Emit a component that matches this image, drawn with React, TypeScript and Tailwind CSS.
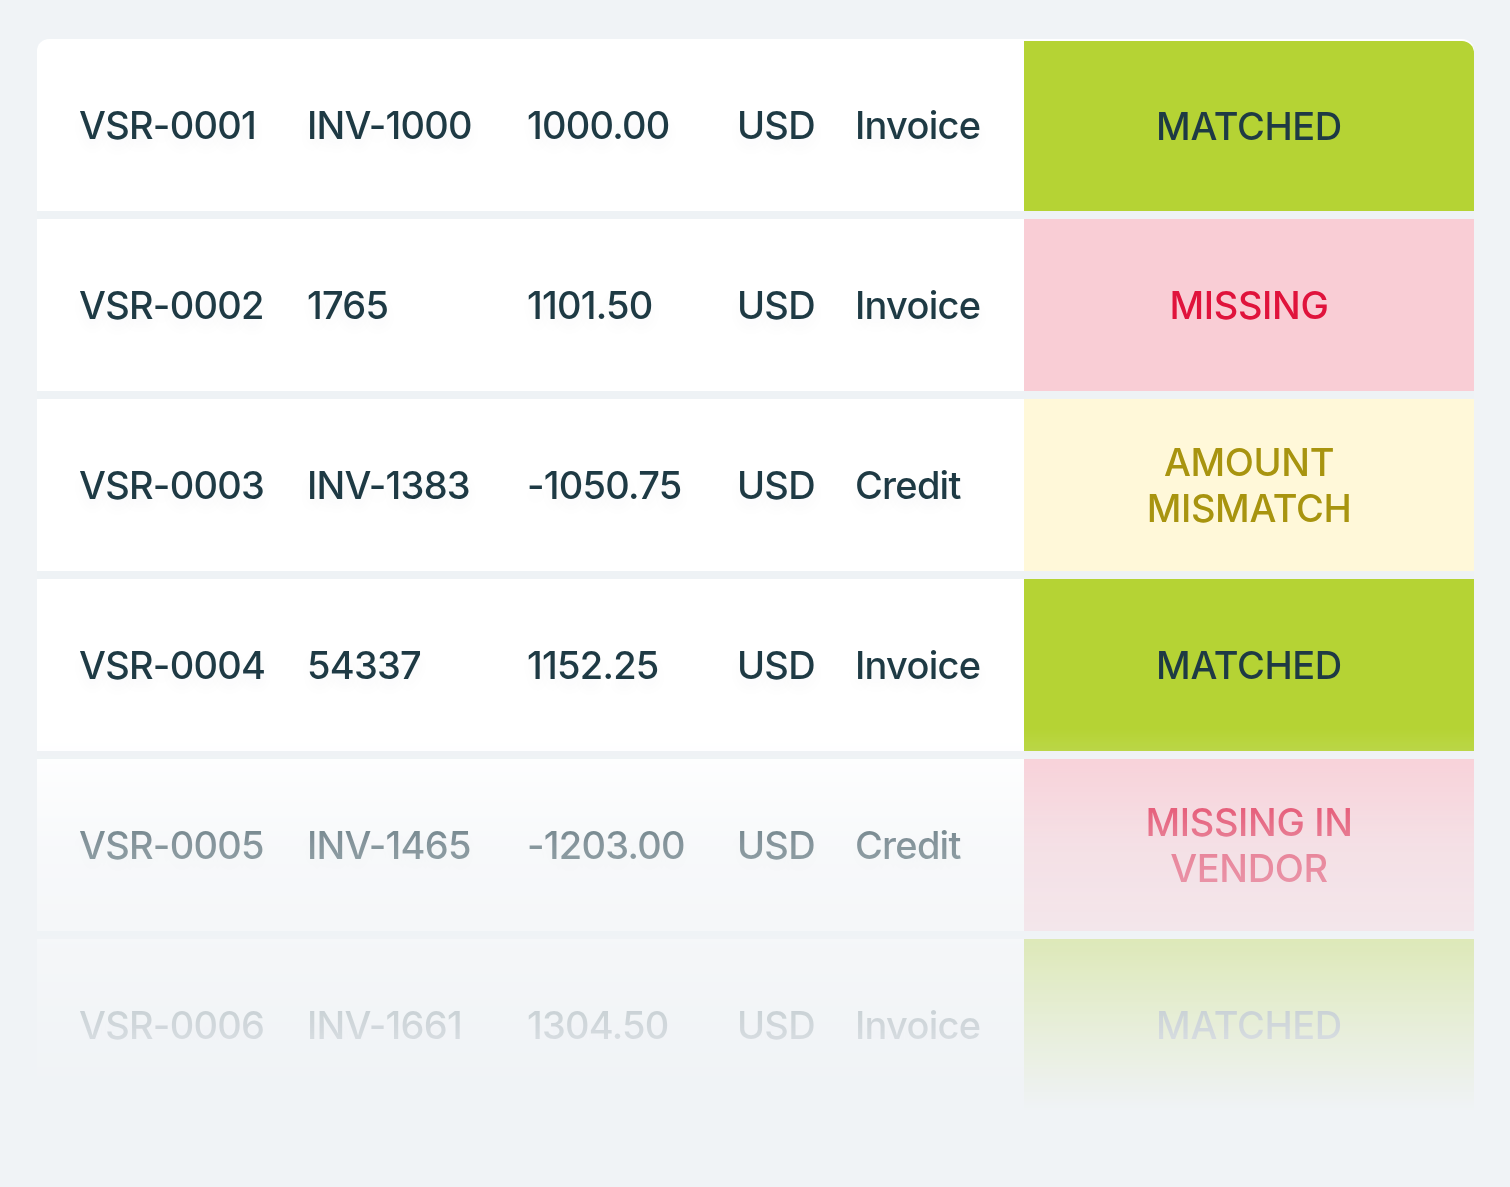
import React from "react"

type Status = "matched" | "missing" | "mismatch" | "vendor"

type Row = {
  id: string
  ref: string
  amount: string
  currency: string
  kind: string
  status: Status
  label: string[]
}

const rows: Row[] = [
  { id: "VSR-0001", ref: "INV-1000", amount: "1000.00", currency: "USD", kind: "Invoice", status: "matched", label: ["MATCHED"] },
  { id: "VSR-0002", ref: "1765", amount: "1101.50", currency: "USD", kind: "Invoice", status: "missing", label: ["MISSING"] },
  { id: "VSR-0003", ref: "INV-1383", amount: "-1050.75", currency: "USD", kind: "Credit", status: "mismatch", label: ["AMOUNT", "MISMATCH"] },
  { id: "VSR-0004", ref: "54337", amount: "1152.25", currency: "USD", kind: "Invoice", status: "matched", label: ["MATCHED"] },
  { id: "VSR-0005", ref: "INV-1465", amount: "-1203.00", currency: "USD", kind: "Credit", status: "vendor", label: ["MISSING IN", "VENDOR"] },
  { id: "VSR-0006", ref: "INV-1661", amount: "1304.50", currency: "USD", kind: "Invoice", status: "matched", label: ["MATCHED"] },
]

const statusStyles: Record<Status, string> = {
  matched: "bg-[#b5d334] text-[#1e3a44]",
  missing: "bg-[#f9cdd5] text-[#e0133c]",
  mismatch: "bg-[#fff8d9] text-[#a8940f]",
  vendor: "bg-[#f9cdd5] text-[#e0133c]",
}

function StatusCell({ status, label, first }: { status: Status; label: string[]; first: boolean }) {
  return (
    <div
      className={`flex w-[450px] shrink-0 flex-col items-center justify-center text-center leading-[46px] tracking-[-0.01em] ${statusStyles[status]} ${
        first ? "mt-[2px] rounded-tr-xl" : ""
      }`}
    >
      {label.map((l) => (
        <span key={l}>{l}</span>
      ))}
    </div>
  )
}

export default function App() {
  return (
    <div className="min-h-[1187px] w-full bg-[#f0f3f6] pt-[39px] pl-[37px]" style={{ fontFamily: "Inter, 'Noto Sans', sans-serif" }}>
      <div className="w-[1437px] [mask-image:linear-gradient(to_bottom,black_0px,black_690px,rgba(0,0,0,0.5)_806px,rgba(0,0,0,0.15)_986px,transparent_1072px)]">
        <div className="flex flex-col gap-2 overflow-hidden rounded-t-xl bg-[#eef2f5]">
          {rows.map((r, i) => (
            <div key={r.id} className="flex h-[172px] bg-white text-[38px] font-medium text-[#1e3a44]">
              <div className="flex flex-1 items-center pl-[42px] tracking-[-0.02em] [text-shadow:0_8px_14px_rgba(31,58,69,0.05)]">
                <span className="w-[228px]">{r.id}</span>
                <span className="w-[220px]">{r.ref}</span>
                <span className="w-[210px]">{r.amount}</span>
                <span className="w-[118px]">{r.currency}</span>
                <span>{r.kind}</span>
              </div>
              <StatusCell status={r.status} label={r.label} first={i === 0} />
            </div>
          ))}
        </div>
      </div>
    </div>
  )
}
